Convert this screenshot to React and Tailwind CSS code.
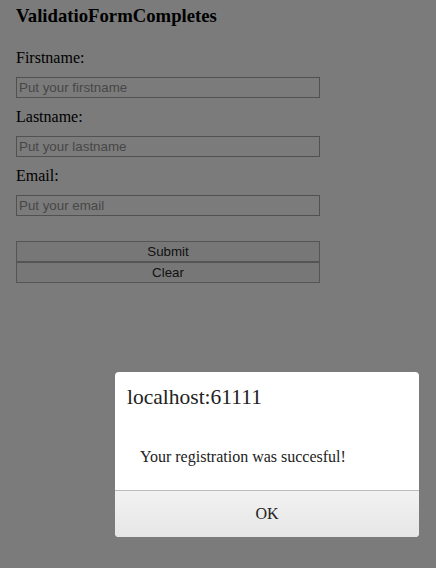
export default function App() {
  return (
    <div className="relative w-[436px] h-[568px] bg-[#7b7b7b] overflow-hidden font-['Liberation_Serif',serif] text-black">
      <div className="pl-4 pt-[5px] w-[320px]">
        <h3 className="text-[18.72px] font-bold leading-[22px]">ValidatioFormCompletes</h3>
        <form className="flex flex-col mt-[22px]">
          <label className="text-[16px] leading-[18px]">Firstname:</label>
          <input
            type="text"
            placeholder="Put your firstname"
            className="mt-[10px] h-[21px] w-[304px] border border-[#515151] bg-transparent px-[2px] text-[13.33px] font-['Liberation_Sans',Arial,sans-serif] placeholder:text-[#474747] outline-none"
          />
          <label className="mt-[10px] text-[16px] leading-[18px]">Lastname:</label>
          <input
            type="text"
            placeholder="Put your lastname"
            className="mt-[10px] h-[21px] w-[304px] border border-[#515151] bg-transparent px-[2px] text-[13.33px] font-['Liberation_Sans',Arial,sans-serif] placeholder:text-[#474747] outline-none"
          />
          <label className="mt-[10px] text-[16px] leading-[18px]">Email:</label>
          <input
            type="text"
            placeholder="Put your email"
            className="mt-[10px] h-[21px] w-[304px] border border-[#515151] bg-transparent px-[2px] text-[13.33px] font-['Liberation_Sans',Arial,sans-serif] placeholder:text-[#474747] outline-none"
          />
          <button
            type="button"
            className="mt-[25px] h-[21px] w-[304px] border border-[#555] bg-[#777] text-[13.33px] leading-none text-[#111] font-['Liberation_Sans',Arial,sans-serif]"
          >
            Submit
          </button>
          <button
            type="button"
            className="h-[21px] w-[304px] border border-[#555] bg-[#777] text-[13.33px] leading-none text-[#111] font-['Liberation_Sans',Arial,sans-serif]"
          >
            Clear
          </button>
        </form>
      </div>

      <div className="absolute left-[115px] top-[372px] w-[304px] h-[165px] rounded-[4px] bg-white flex flex-col overflow-hidden">
        <div className="h-[118px] pt-[13px]">
          <div className="pl-3 text-[21.5px] leading-[25px] text-[#222]">localhost:61111</div>
          <div className="pl-[25px] mt-[38px] text-[16px] leading-[18px] text-[#222]">
            Your registration was succesful!
          </div>
        </div>
        <div className="h-px bg-[#bdbdbd]" />
        <button
          type="button"
          className="h-[46px] w-full bg-gradient-to-b from-[#f2f2f2] to-[#e6e6e6] text-[16px] text-[#222] font-['Liberation_Serif',serif]"
        >
          OK
        </button>
      </div>
    </div>
  );
}
